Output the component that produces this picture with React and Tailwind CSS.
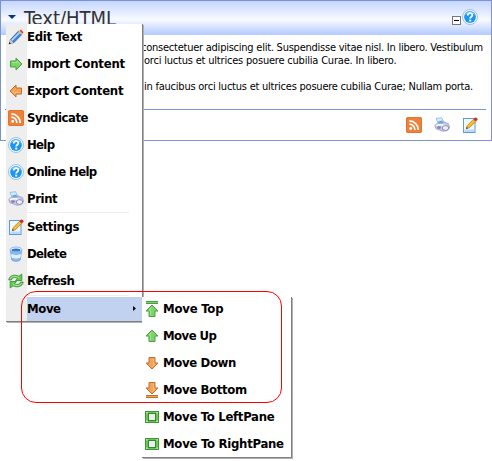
import React from "react";

const Svg = ({ children }) => (
  <svg viewBox="0 0 16 16" className="h-4 w-4 shrink-0">{children}</svg>
);

const Pencil = () => (
  <Svg>
    <path d="M1.500 14.500l1-4L10.500 2l3.500 3.300L6 13.500z" fill="#3f83dc" stroke="#2f5da8" strokeWidth=".8" />
    <path d="M3.800 11.300L11.500 3.500" stroke="#b5d6ff" strokeWidth="1.700" />
    <path d="M11.500 1.800l1.300-1.300 2.700 2.700-1.200 1.600z" fill="#d93a3a" />
    <path d="M10.300 2.700l3 3 .9-.9-3-3z" fill="#f5d060" />
    <path d="M.8 15.200l1.500-4.500 3 3z" fill="#e9cfa0" />
    <path d="M.7 15.300l.7-2.300 1.700 1.700z" fill="#222" />
  </Svg>
);

const Arrow = ({ dir, color, bar = false }) => {
  const green = color === "green";
  const rot = { right: 0, down: 90, left: 180, up: 270 }[dir];
  const dark = green ? "#46a040" : "#bd6e30";
  const mid = green ? "#7dd36a" : "#f4a355";
  const light = green ? "#a5e492" : "#fbbd7c";
  const shift = bar ? (dir === "up" ? 2 : -2) : 0;
  return (
    <Svg>
      <g transform={`translate(0 ${shift}) rotate(${rot} 8 8)`}>
        <path d="M2.500 5H8V2L14 8 8 14v-3H2.500z" fill={mid} stroke={dark} strokeWidth="1" strokeLinejoin="round" />
        <path d="M3.500 6.500h5.500V5l2.800 3" fill="none" stroke={light} strokeWidth="1" />
      </g>
      {bar && <path d={dir === "up" ? "M2 1.500h12" : "M2 14.500h12"} stroke={dark} strokeWidth="3" />}
      {bar && <path d={dir === "up" ? "M2 1.500h12" : "M2 14.500h12"} stroke={mid} strokeWidth="1" />}
    </Svg>
  );
};

const Rss = () => (
  <Svg>
    <rect width="16" height="16" rx="2" fill="#ee8038" />
    <rect x=".5" y=".5" width="15" height="15" rx="1.500" fill="none" stroke="#d9722e" strokeWidth=".8" />
    <circle cx="4.700" cy="11.500" r="1.400" fill="#fff" />
    <path d="M3.300 7.200a5.600 5.600 0 0 1 5.600 5.700M3.300 3.900a9 9 0 0 1 9 9" fill="none" stroke="#fff" strokeWidth="1.700" />
  </Svg>
);

const Help = () => (
  <Svg>
    <circle cx="8" cy="8" r="7.500" fill="#f2faff" stroke="#8fbce6" strokeWidth=".9" />
    <circle cx="8" cy="8" r="5.900" fill="#1d96f2" />
    <path d="M3.500 5.600a5 5 0 0 1 9 0" fill="none" stroke="#7cc8ff" strokeWidth="1" />
    <path d="M5.700 6.500c0-3.400 4.700-3 4.700-.4 0 1.800-2.200 1.600-2.200 3.500" fill="none" stroke="#fff" strokeWidth="1.800" />
    <rect x="7.200" y="10.600" width="2" height="1.900" fill="#fff" />
  </Svg>
);

const Printer = () => (
  <Svg>
    <path d="M.7 8.500L4 5.500l5-1 5.500 2.200 1.200 4-2.700 3-4 .6-7-2.500z" fill="#c5c6e4" stroke="#9496c6" strokeWidth=".7" />
    <path d="M2 1.500l5.500-.8 2.700 4.800-5.700 1.500z" fill="#d8edff" stroke="#86b7e8" strokeWidth=".8" />
    <path d="M4 4.500l4-1 1.800 2.300-5 1.300z" fill="#6aa5e8" />
    <path d="M2 8.700l4-1.200 5.500 1.300" fill="none" stroke="#fff" strokeWidth="1.400" />
    <ellipse cx="11.500" cy="11" rx="3.200" ry="2.400" fill="#eeeefb" stroke="#8082b6" strokeWidth=".9" />
    <ellipse cx="5" cy="10.600" rx="2" ry="1.400" fill="#8486ba" />
  </Svg>
);

const Note = () => (
  <Svg>
    <rect x="1.500" y="1.500" width="11.500" height="14" fill="#f0f8ff" stroke="#5f9ad8" />
    <path d="M2.500 12.500h9.500v2.500h-9.500z" fill="#b9d9f8" />
    <path d="M4.300 11.700l1-3.200L11.600 2.200l2.200 2.200-6.300 6.300z" fill="#f6bd32" stroke="#a87518" strokeWidth=".7" />
    <path d="M4.200 11.800l.5-1.700 1.200 1.200z" fill="#222" />
    <circle cx="13.700" cy="2.200" r="1.800" fill="#cc3030" />
  </Svg>
);

const Bucket = () => (
  <Svg>
    <path d="M2.300 4l1.500 10c1.500 1.700 6.900 1.700 8.400 0l1.500-10z" fill="#8abdf0" stroke="#5a98da" strokeWidth=".7" />
    <path d="M3 8c3 1.500 7 1.500 10 0l-.5 3.500c-3 1.300-6 1.300-9 0z" fill="#e6f3ff" />
    <ellipse cx="8" cy="3.700" rx="6" ry="2.700" fill="#e4f2ff" stroke="#76a9df" strokeWidth=".8" />
    <ellipse cx="8" cy="4" rx="4.500" ry="1.600" fill="#2f78d0" />
  </Svg>
);

const Refresh = () => (
  <Svg>
    <g fill="#6aca54" stroke="#2f8a2c" strokeWidth=".8" strokeLinejoin="round">
      <path d="M.8 7C1.200 2.500 6.500 1 11 3.200L13.800 1v6.500H7.500L9.500 5.300C7 4 4 4.300 3.500 7z" />
      <path d="M15.200 9c-.4 4.500-5.700 6-10.200 3.800L2.200 15V8.500h6.300L6.500 10.700c2.500 1.300 5.500 1 6-1.700z" />
    </g>
    <path d="M2 6C3.500 3.200 7 2.800 11 4.500M14 10c-1.500 2.800-5 3.200-9 1.500" fill="none" stroke="#b9efa8" strokeWidth=".8" />
  </Svg>
);

const Pane = () => (
  <Svg>
    <rect x="1.500" y="2.500" width="13" height="11" fill="#6cc456" stroke="#3e9634" />
    <rect x="4.500" y="4.500" width="7" height="7" fill="#ececec" stroke="#2f8a2c" />
    <path d="M2 3h1.500v1.500H2zM12.500 3H14v1.500h-1.500zM2 11.500h1.500V13H2zM12.500 11.500H14V13h-1.500z" fill="#b7eea4" />
  </Svg>
);

const Item = ({ icon, label, track }) => (
  <div className="flex h-[27px] items-center">
    <span className="flex w-[21px] pl-[2px]">{icon}</span>
    <span className={`whitespace-nowrap ${track}`}>{label}</span>
  </div>
);

const mainItems = [
  [<Pencil />, "Edit Text", "tracking-[-0.25px]"],
  [<Arrow dir="right" color="green" />, "Import Content", "tracking-[-0.2px]"],
  [<Arrow dir="left" color="orange" />, "Export Content", "tracking-[-0.25px]"],
  [<Rss />, "Syndicate", "tracking-[-0.45px]"],
  [<Help />, "Help", "tracking-[-0.7px]"],
  [<Help />, "Online Help", "tracking-[-0.65px]"],
  [<Printer />, "Print", "tracking-[-0.4px]"],
];
const moduleItems = [
  [<Note />, "Settings", "tracking-[-0.4px]"],
  [<Bucket />, "Delete", "tracking-[-0.65px]"],
  [<Refresh />, "Refresh", "tracking-[-0.55px]"],
];
const moveItems = [
  [<Arrow dir="up" color="green" bar />, "Move Top", "tracking-[-0.2px]"],
  [<Arrow dir="up" color="green" />, "Move Up", "tracking-[-0.55px]"],
  [<Arrow dir="down" color="orange" />, "Move Down", "tracking-[-0.35px]"],
  [<Arrow dir="down" color="orange" bar />, "Move Bottom", "tracking-[-0.35px]"],
  [<Pane />, "Move To LeftPane", "tracking-[-0.3px]"],
  [<Pane />, "Move To RightPane", "tracking-[-0.27px]"],
];

const renderItems = (items) =>
  items.map(([icon, label, track]) => <Item key={label} icon={icon} label={label} track={track} />);

export default function App() {
  return (
    <div className="relative h-[461px] w-[492px] overflow-hidden bg-white text-black [font-family:'DejaVu_Sans_Condensed','DejaVu_Sans',sans-serif]">
      <section className="flex h-[141px] w-[492px] flex-col border border-[#7b93d0] bg-white">
        <header className="flex h-[34px] shrink-0 items-start justify-between bg-linear-to-b from-[#c4d5ff] via-[#f8faff] via-55% to-[#b3c9ff] pr-[13px] pl-[7px]">
          <div className="flex items-start">
            <svg viewBox="0 0 8 4" className="mt-[14px] h-1 w-2"><path d="M0 0h8L4 4z" fill="#003399" /></svg>
            <h1 className="ml-2 pt-[5px] text-[20px] leading-6 whitespace-nowrap text-[#333]">Text/HTML</h1>
          </div>
          <div className="flex items-start">
            <span className="mt-[15px] flex h-[9px] w-[9px] items-center justify-center border border-[#777] bg-white">
              <span className="h-px w-[5px] bg-black" />
            </span>
            <span className="mt-2 ml-px"><Help /></span>
          </div>
        </header>
        <div className="mr-[5px] ml-1 h-[75px] shrink-0 border-b border-[#7b93d0] pt-[6px] text-[11px] leading-[13px] whitespace-nowrap">
          <p className="pl-[136px] tracking-[-0.24px]">consectetuer adipiscing elit. Suspendisse vitae nisl. In libero. Vestibulum</p>
          <p className="pl-[139px] tracking-[-0.2px]">orci luctus et ultrices posuere cubilia Curae. In libero.</p>
          <p className="mt-[13px] pl-[139px] tracking-[-0.23px]">in faucibus orci luctus et ultrices posuere cubilia Curae; Nullam porta.</p>
        </div>
        <footer className="flex justify-end gap-3 pt-[7px] pr-[13px]"><Rss /><Printer /><Note /></footer>
      </section>

      <nav className="absolute top-6 left-[6px] h-[298px] w-[137px] border-r border-b border-[#808080] bg-linear-to-r from-[#eee] from-[21px] to-white to-[21px] text-[13px] font-bold shadow-[1px_1px_0_#b0b0b0]">
        <div className="-mt-px">{renderItems(mainItems)}</div>
        <div className="ml-[21px] h-px w-[102px] bg-[#eee]" />
        {renderItems(moduleItems)}
        <div className="ml-[21px] mt-px h-px w-[102px] bg-[#eee]" />
        <div className="mt-px ml-[21px] flex h-[24px] items-center justify-between bg-[#c1d2f0] pr-[6px] pb-px">
          <span className="tracking-[-0.4px]">Move</span>
          <svg viewBox="0 0 3 5" className="h-[5px] w-[3px]"><path d="M0 0l3 2.500L0 5z" /></svg>
        </div>
      </nav>

      <nav className="absolute top-[297px] left-[142px] h-[161px] w-[150px] border-r border-b border-[#808080] bg-white text-[13px] font-bold shadow-[1px_1px_0_#b0b0b0]">
        <div className="-mt-[2px]">{renderItems(moveItems)}</div>
      </nav>

      <div className="absolute top-[291px] left-[21px] h-[112px] w-[261px] rounded-[15px] border border-[#f00]" />
    </div>
  );
}
